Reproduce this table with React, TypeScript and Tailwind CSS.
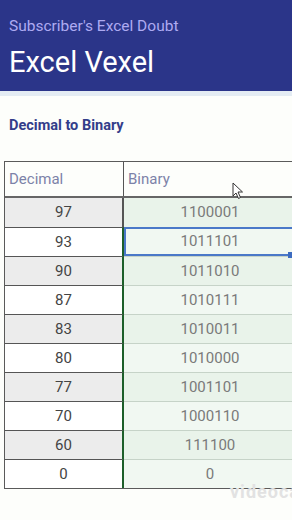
const rows: [string, string][] = [
  ["97", "1100001"],
  ["93", "1011101"],
  ["90", "1011010"],
  ["87", "1010111"],
  ["83", "1010011"],
  ["80", "1010000"],
  ["77", "1001101"],
  ["70", "1000110"],
  ["60", "111100"],
  ["0", "0"],
];

function Cursor() {
  return (
    <svg width="12" height="18" viewBox="0 0 12 18" className="absolute left-[232px] top-[182px]">
      <path d="M1 1 L1 14 L4 11 L6.5 16.5 L8.5 15.5 L6 10 L10.5 10 Z" fill="white" stroke="#333" strokeWidth="1" strokeLinejoin="round" />
    </svg>
  );
}

export default function App() {
  return (
    <div className="relative h-[520px] w-[292px] overflow-hidden bg-[#fdfefb] font-['Roboto',sans-serif]">
      <header className="h-[91px] bg-[#2b3589] px-[9px] pt-[15px]">
        <p className="text-[15.5px] leading-[22px] text-[#aeaaf2]">Subscriber's Excel Doubt</p>
        <h1 className="mt-[8px] text-[29px] leading-[34px] text-white">Excel Vexel</h1>
      </header>
      <div className="h-[5px] bg-[#e4ecf3]" />
      <h2 className="pl-[9px] pt-[21px] text-[14.5px] font-bold leading-[18px] text-[#333d8a]">Decimal to Binary</h2>

      <div className="ml-[4px] mt-[26px] w-[300px] border-y border-l border-[#5a5a5a]">
        <div className="flex h-[36px] border-b-2 border-[#666]">
          <div className="flex w-[119px] items-center border-r border-[#555] pl-[4px] text-[15px] text-[#7c82a8]">Decimal</div>
          <div className="flex flex-1 items-center pl-[4px] text-[15px] text-[#7c82a8]">Binary</div>
        </div>
        {rows.map(([d, b], i) => (
          <div key={d} className="flex h-[29px]">
            <div
              className={`flex w-[119px] items-center justify-center border-r-2 text-[15px] text-[#444] ${
                i > 0 ? "border-t border-[#555]" : ""
              } ${i % 2 === 0 ? "bg-[#ececec]" : "bg-white"} ${i > 0 ? "border-r-[#1d5f2a]" : "border-r-[#555]"}`}
            >
              {d}
            </div>
            <div
              className={`flex flex-1 items-center justify-center pr-[8px] text-[15px] text-[#7a7a7a] ${
                i === 1 ? "border-2 border-[#4a78c8]" : i > 1 ? "border-t border-[#c6d3c8]" : ""
              } ${i % 2 === 0 ? "bg-[#e9f3ea]" : "bg-[#f1f8f2]"}`}
            >
              {b}
            </div>
          </div>
        ))}
      </div>
      <div className="absolute left-[288px] top-[252px] h-[6px] w-[6px] bg-[#3c6bc0]" />
      <p className="absolute left-[230px] top-[478px] text-[18px] font-bold tracking-[1px] text-[#e2e2e2]">videocam</p>
      <Cursor />
    </div>
  );
}
